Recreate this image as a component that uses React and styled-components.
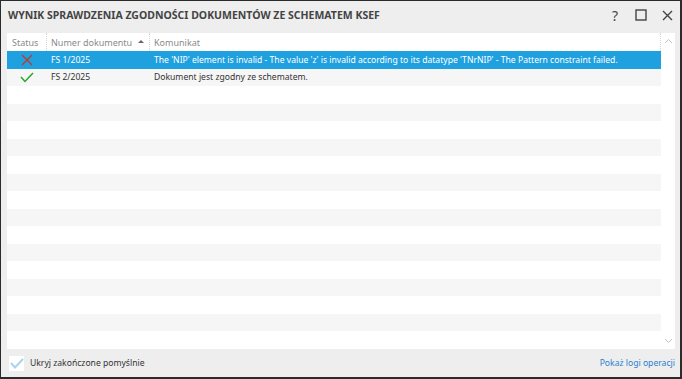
import React from "react";
import styled, { createGlobalStyle } from "styled-components";

const Global = createGlobalStyle`
  html, body { margin: 0; padding: 0; background: #ffffff; }
  body { font-family: "Noto Sans", "Open Sans", sans-serif; }
  * { box-sizing: border-box; }
`;

const Window = styled.div`
  width: 682px;
  height: 379px;
  display: flex;
  flex-direction: column;
  background: #eeeeee;
  border: 1px solid #2b2b2b;
  border-width: 1px 2px 2px 1px;
`;

const TitleBar = styled.div`
  height: 28px;
  display: flex;
  align-items: center;
  padding: 0 0 0 7px;
  flex-shrink: 0;
`;

const Title = styled.h1`
  flex: 1;
  margin: 0;
  font-size: 10.5px;
  font-weight: 700;
  color: #444444;
  white-space: nowrap;
`;

const TitleButton = styled.button`
  width: 26px;
  height: 24px;
  border: 0;
  background: transparent;
  padding: 0;
  display: flex;
  align-items: center;
  justify-content: center;
  color: #444;
  font-family: "Noto Sans", sans-serif;
  font-size: 14px;
`;

const Body = styled.div`
  flex: 1;
  display: flex;
  flex-direction: column;
  padding: 4px 5px 0 6px;
  min-height: 0;
`;

const Grid = styled.div`
  flex: 1;
  display: flex;
  background: #ffffff;
  min-height: 0;
  overflow: hidden;
`;

const Table = styled.div`
  flex: 1;
  display: flex;
  flex-direction: column;
`;

const HeaderRow = styled.div`
  height: 18px;
  display: flex;
  align-items: center;
  font-size: 9px;
  color: #8a8a8a;
`;

const HeaderCell = styled.div`
  width: ${(p) => p.w || "auto"};
  flex: ${(p) => (p.w ? "none" : 1)};
  height: 100%;
  display: flex;
  align-items: center;
  padding-left: ${(p) => p.pad || "4px"};
  border-right: 1px dotted #d4d4d4;
  position: relative;
`;

const SortArrow = styled.span`
  position: absolute;
  right: 5px;
  top: 7px;
  width: 0;
  height: 0;
  border-left: 3px solid transparent;
  border-right: 3px solid transparent;
  border-bottom: 3px solid #666;
`;

const Row = styled.div`
  height: 17.5px;
  display: flex;
  align-items: center;
  font-size: 8.6px;
  color: ${(p) => (p.selected ? "#ffffff" : "#333333")};
  background: ${(p) => (p.selected ? "#1fa0df" : p.striped ? "#f6f6f6" : "#ffffff")};
`;

const Cell = styled.div`
  width: ${(p) => p.w || "auto"};
  flex: ${(p) => (p.w ? "none" : 1)};
  display: flex;
  align-items: center;
  justify-content: ${(p) => (p.center ? "center" : "flex-start")};
  padding-left: ${(p) => (p.center ? "0" : "4px")};
  white-space: nowrap;
  overflow: hidden;
`;

const ScrollBar = styled.div`
  width: 14px;
  display: flex;
  flex-direction: column;
  justify-content: space-between;
  align-items: center;
  padding: 5px 0;
  background: #ffffff;
`;

const Footer = styled.div`
  height: 28px;
  display: flex;
  align-items: center;
  justify-content: space-between;
  padding: 0 0 0 2px;
  font-size: 8.6px;
`;

const CheckLabel = styled.label`
  display: flex;
  align-items: center;
  gap: 6px;
  color: #333;
`;

const CheckBox = styled.span`
  width: 15px;
  height: 15px;
  background: #fff;
  display: flex;
  align-items: center;
  justify-content: center;
`;

const Link = styled.a`
  color: #2a7fcf;
  text-decoration: none;
`;

const Cross = () => (
  <svg width="12" height="12" viewBox="0 0 12 12">
    <path d="M1 1 L11 11 M11 1 L1 11" stroke="#c0392b" strokeWidth="1.3" fill="none" />
  </svg>
);

const Tick = ({ color = "#2aa52a", w = 1.5 }) => (
  <svg width="14" height="11" viewBox="0 0 14 11">
    <path d="M1 5 L5 9.5 L13 1" stroke={color} strokeWidth={w} fill="none" />
  </svg>
);

const Chevron = ({ up }) => (
  <svg width="9" height="6" viewBox="0 0 9 6">
    <path d={up ? "M1 5 L4.5 1.5 L8 5" : "M1 1 L4.5 4.5 L8 1"} stroke="#c2c2c2" strokeWidth="1" fill="none" />
  </svg>
);

const rows = [
  { status: "err", nr: "FS 1/2025", msg: "The 'NIP' element is invalid - The value 'z' is invalid according to its datatype 'TNrNIP' - The Pattern constraint failed." },
  { status: "ok", nr: "FS 2/2025", msg: "Dokument jest zgodny ze schematem." },
];

const TOTAL_ROWS = 17;

export default function App() {
  const filled = [...rows];
  while (filled.length < TOTAL_ROWS) filled.push(null);

  return (
    <>
      <Global />
      <Window>
        <TitleBar>
          <Title>WYNIK SPRAWDZENIA ZGODNOŚCI DOKUMENTÓW ZE SCHEMATEM KSEF</Title>
          <TitleButton>?</TitleButton>
          <TitleButton>
            <svg width="12" height="12" viewBox="0 0 12 12">
              <rect x="1" y="1" width="10" height="10" stroke="#444" strokeWidth="1.4" fill="none" />
            </svg>
          </TitleButton>
          <TitleButton>
            <svg width="11" height="11" viewBox="0 0 11 11">
              <path d="M1 1 L10 10 M10 1 L1 10" stroke="#444" strokeWidth="1.4" fill="none" />
            </svg>
          </TitleButton>
        </TitleBar>
        <Body>
          <Grid>
            <Table>
              <HeaderRow>
                <HeaderCell w="40px" pad="5px">Status</HeaderCell>
                <HeaderCell w="103px">
                  Numer dokumentu
                  <SortArrow />
                </HeaderCell>
                <HeaderCell>Komunikat</HeaderCell>
              </HeaderRow>
              {filled.map((r, i) => (
                <Row key={i} selected={i === 0} striped={i % 2 === 1}>
                  {r && (
                    <>
                      <Cell w="40px" center>
                        {r.status === "err" ? <Cross /> : <Tick />}
                      </Cell>
                      <Cell w="103px">{r.nr}</Cell>
                      <Cell>{r.msg}</Cell>
                    </>
                  )}
                </Row>
              ))}
            </Table>
            <ScrollBar>
              <Chevron up />
              <Chevron />
            </ScrollBar>
          </Grid>
          <Footer>
            <CheckLabel>
              <CheckBox>
                <Tick color="#a9d4ee" w={2} />
              </CheckBox>
              Ukryj zakończone pomyślnie
            </CheckLabel>
            <Link href="#">Pokaż logi operacji</Link>
          </Footer>
        </Body>
      </Window>
    </>
  );
}
